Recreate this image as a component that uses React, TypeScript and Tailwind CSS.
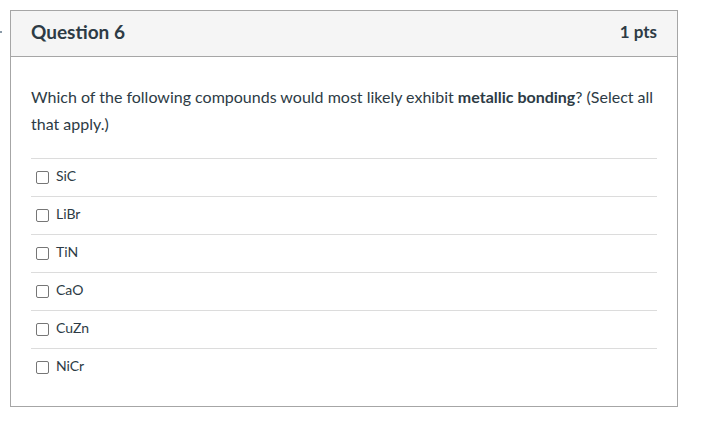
const answers = ["SiC", "LiBr", "TiN", "CaO", "CuZn", "NiCr"];

export default function App() {
  return (
    <div className="relative h-[421px] w-[711px] bg-white font-['Lato',sans-serif] text-[#2d3b45]">
      {/* small marker at the far left edge */}
      <span className="absolute left-0 top-[31px] h-[2px] w-[2px] bg-[#8a9aa8]" />
      <div className="absolute left-[10px] top-[10px] w-[668px] border border-[#a6a6a6]">
        <div className="flex h-[46px] items-center justify-between border-b border-[#a6a6a6] bg-[#f5f5f5] pb-[3px] pl-[20px] pr-[20px]">
          <h2 className="text-[19px] font-bold">Question 6</h2>
          <span className="text-[17px] font-bold">1 pts</span>
        </div>
        <div className="px-[20px] pb-[20px] pt-[26px]">
          <p className="text-[16px] leading-[27px]">
            Which of the following compounds would most likely exhibit <b>metallic bonding</b>? (Select all
            that apply.)
          </p>
          <div className="mt-[21px]">
            {answers.map((a) => (
              <label
                key={a}
                className="flex h-[38px] items-center gap-[7px] border-t border-[#dcdcdc] pl-[5px] text-[14px]"
              >
                <span className="h-[13px] w-[13px] shrink-0 rounded-[2px] border border-[#767676] bg-white" />
                <span className="pb-[4px]">{a}</span>
              </label>
            ))}
          </div>
        </div>
      </div>
    </div>
  );
}
